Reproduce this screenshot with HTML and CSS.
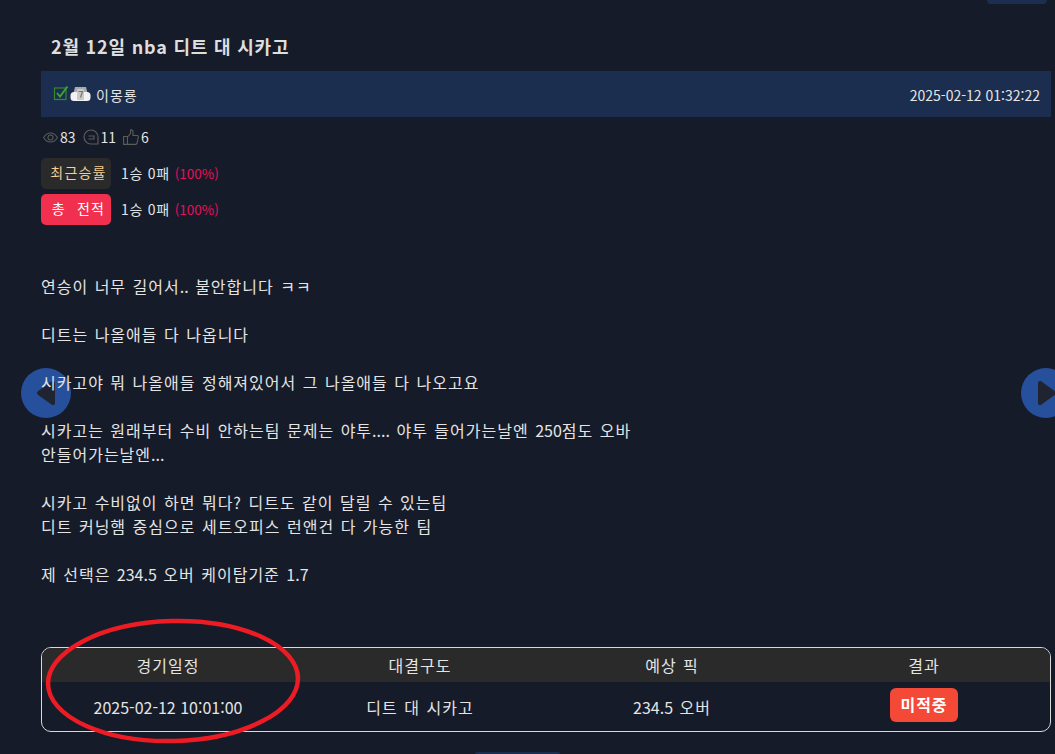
FILE: index.html
```html
<!DOCTYPE html>
<html lang="ko">
<head>
    <meta charset="UTF-8">
    <title>2월 12일 nba 디트 대 시카고</title>
    <link rel="stylesheet" href="styles.css">
</head>
<body>
    <div class="top-tab"></div>

    <button class="nav-arrow prev">
        <svg width="20" height="26" viewBox="0 0 20 26"><path d="M17 3L3 13l14 10z" fill="#1f2430" stroke="#1f2430" stroke-width="4" stroke-linejoin="round"/></svg>
    </button>
    <button class="nav-arrow next">
        <svg width="20" height="26" viewBox="0 0 20 26"><path d="M3 3l14 10L3 23z" fill="#1f2430" stroke="#1f2430" stroke-width="4" stroke-linejoin="round"/></svg>
    </button>

    <div class="post">
        <h1 class="post-title">2월 12일 nba 디트 대 시카고</h1>

        <div class="author-bar">
            <div class="author">
                <svg class="icon-check" width="16" height="16" viewBox="0 0 16 16">
                    <rect x="1.5" y="3" width="11.5" height="11.5" fill="none" stroke="#2f8a2a" stroke-width="1.2"/>
                    <path d="M4 8l3 3.5L14.5 1.5" fill="none" stroke="#3fa535" stroke-width="1.8"/>
                </svg>
                <svg class="icon-level" width="21" height="16" viewBox="0 0 21 16">
                    <path d="M5 1h11l1.500 6H3.500z" fill="#a9a9a9"/>
                    <rect x="0.500" y="6" width="20" height="9" rx="3.500" fill="#f2f2f2"/>
                    <rect x="7" y="3" width="7" height="11" rx="1" fill="#c9c9c9"/>
                    <path d="M8.500 5.500h4l-2 6" fill="none" stroke="#777" stroke-width="1.200"/>
                </svg>
                <span>이몽룡</span>
            </div>
            <span class="post-date">2025-02-12 01:32:22</span>
        </div>

        <div class="stats">
            <svg width="15" height="11" viewBox="0 0 16 11">
                <path d="M.6 5.500C2.500 2.300 5 .6 8 .6s5.500 1.700 7.400 4.900C13.500 8.700 11 10.400 8 10.400S2.500 8.700.6 5.500z" fill="none" stroke="#5c5c5c" stroke-width="1.100"/>
                <circle cx="8" cy="5.500" r="2.700" fill="none" stroke="#5c5c5c" stroke-width="1.100"/>
            </svg>
            <span class="stat-num">83</span>
            <svg class="stat-icon" width="16" height="16" viewBox="0 0 16 16">
                <path d="M8 1a7 7 0 1 0 0 14h7V8a7 7 0 0 0-7-7z" fill="none" stroke="#5c5c5c" stroke-width="1.200"/>
                <path d="M5.500 7h5.500v3H5.500" fill="none" stroke="#5c5c5c" stroke-width="1.100"/>
            </svg>
            <span class="stat-num">11</span>
            <svg class="stat-icon" width="16" height="16" viewBox="0 0 16 16">
                <path d="M.6 7.500h3.900v7.900H.6zM4.500 8l3-3.500V1c1.500-.5 2.500.5 2.500 2v3.500h4.200c.8 0 1.300.7 1.100 1.500l-1.200 6c-.2.700-.6 1.400-1.300 1.400H4.500" fill="none" stroke="#5c5c5c" stroke-width="1.100"/>
            </svg>
            <span class="stat-num">6</span>
        </div>

        <div class="record-row">
            <span class="record-label recent">최근승률</span>
            <span class="record-text">1승 0패</span>
            <span class="record-rate">(100%)</span>
        </div>
        <div class="record-row">
            <span class="record-label total">총 전적</span>
            <span class="record-text">1승 0패</span>
            <span class="record-rate">(100%)</span>
        </div>

        <div class="post-body">
            <p>연승이 너무 길어서<span class="num">..</span> 불안합니다 ㅋㅋ</p>
            <p>디트는 나올애들 다 나옵니다</p>
            <p>시카고야 뭐 나올애들 정해져있어서 그 나올애들 다 나오고요</p>
            <p>시카고는 원래부터 수비 안하는팀 문제는 야투<span class="num">....</span> 야투 들어가는날엔 <span class="num">250</span>점도 오바<br>안들어가는날엔<span class="num">...</span></p>
            <p>시카고 수비없이 하면 뭐다? 디트도 같이 달릴 수 있는팀<br>디트 커닝햄 중심으로 세트오피스 런앤건 다 가능한 팀</p>
            <p>제 선택은 <span class="num">234.5</span> 오버 케이탑기준 <span class="num">1.7</span></p>
        </div>

        <div class="pick-table">
            <div class="pick-head">
                <span>경기일정</span>
                <span>대결구도</span>
                <span>예상 픽</span>
                <span>결과</span>
            </div>
            <div class="pick-row">
                <span class="num">2025-02-12 10:01:00</span>
                <span>디트 대 시카고</span>
                <span><span class="num">234.5</span> 오버</span>
                <span><b class="result-badge">미적중</b></span>
            </div>
        </div>
    </div>

    <div class="bottom-tab"></div>

    <svg class="circle-mark" width="260" height="130" viewBox="0 0 260 130">
        <ellipse cx="128" cy="64" rx="125" ry="60" transform="rotate(-1.500 128 64)" fill="none" stroke="#ed1c24" stroke-width="4.500"/>
    </svg>
</body>
</html>
```
FILE: styles.css
```css
* {
    box-sizing: border-box;
    margin: 0;
    padding: 0;
}
html, body {
    height: 754px;
    overflow: hidden;
}
body {
    position: relative;
    font-family: 'Noto Sans CJK KR', 'Noto Sans', sans-serif;
    font-size: 16px;
    line-height: 24px;
    letter-spacing: 1px;
    word-spacing: 1px;
    color: #e4e4e4;
    background-color: #151b28;
}
.num {
    letter-spacing: 0;
    word-spacing: 0;
}
.top-tab, .bottom-tab {
    position: absolute;
    background-color: #1c2e4f;
}
.top-tab {
    top: 0;
    left: 987px;
    width: 60px;
    height: 4px;
    border-radius: 0 0 10px 10px;
}
.bottom-tab {
    top: 752px;
    left: 475px;
    width: 85px;
    height: 2px;
    border-radius: 8px 8px 0 0;
}
.post {
    position: relative;
    padding: 33px 4px 0 41px;
}
.post-title {
    padding-left: 10px;
    font-size: 18px;
    line-height: 26px;
    font-weight: 700;
    letter-spacing: 0.8px;
    word-spacing: 0;
    color: #dedede;
    margin-bottom: 12px;
}
.author-bar {
    display: flex;
    justify-content: space-between;
    align-items: center;
    height: 46px;
    padding: 2px 11px 0 12px;
    background-color: #1c2e4f;
    font-size: 14px;
}
.author {
    display: flex;
    align-items: center;
}
.icon-check {
    margin: -5px 1px 0 0;
}
.icon-level {
    margin: -2px 5px 0 0;
}
.post-date {
    letter-spacing: 0;
    word-spacing: 0;
}
.stats {
    display: flex;
    align-items: center;
    height: 20px;
    margin: 10px 0 11px 2px;
    font-size: 14px;
    letter-spacing: 0;
}
.stat-num {
    margin-left: 2px;
}
.stat-icon {
    margin-left: 7px;
}
.record-row {
    display: flex;
    align-items: center;
    height: 31px;
    margin-bottom: 5px;
    font-size: 14px;
    letter-spacing: 0.7px;
    word-spacing: 0;
}
.record-text, .record-rate {
    margin-bottom: 2px;
}
.record-label {
    width: 70px;
    height: 31px;
    margin-right: 10px;
    padding-left: 5px;
    border-radius: 5px;
    text-align: center;
    line-height: 29px;
    letter-spacing: 1.2px;
}
.recent {
    background-color: #2a2a2a;
    color: #f5cf94;
}
.total {
    background-color: #f0304e;
    color: #fff;
    word-spacing: 6px;
}
.record-rate {
    margin-left: 5px;
    font-size: 13.5px;
    letter-spacing: 0;
    color: #e6105c;
}
.post-body {
    margin-top: 49px;
}
.post-body p {
    margin-bottom: 24px;
}
.pick-table {
    margin-top: 61px;
    height: 85px;
    border: 1px solid #d8d8d8;
    border-radius: 10px;
    overflow: hidden;
}
.pick-head, .pick-row {
    display: grid;
    grid-template-columns: repeat(4, 1fr);
    align-items: center;
    text-align: center;
}
.pick-head {
    height: 34px;
    background-color: #2a2a2a;
}
.pick-row {
    height: 49px;
}
.result-badge {
    display: inline-block;
    width: 68px;
    height: 34px;
    margin-top: -8px;
    border-radius: 6px;
    background-color: #f44936;
    color: #fff;
    line-height: 32px;
}
.nav-arrow {
    position: absolute;
    top: 368px;
    width: 50px;
    height: 50px;
    display: flex;
    align-items: center;
    justify-content: center;
    border: none;
    border-radius: 50%;
    background-color: #27509c;
}
.prev {
    left: 21px;
}
.next {
    left: 1021px;
}
.next svg {
    margin-left: 2px;
}
.circle-mark {
    position: absolute;
    top: 617px;
    left: 45px;
}
```
